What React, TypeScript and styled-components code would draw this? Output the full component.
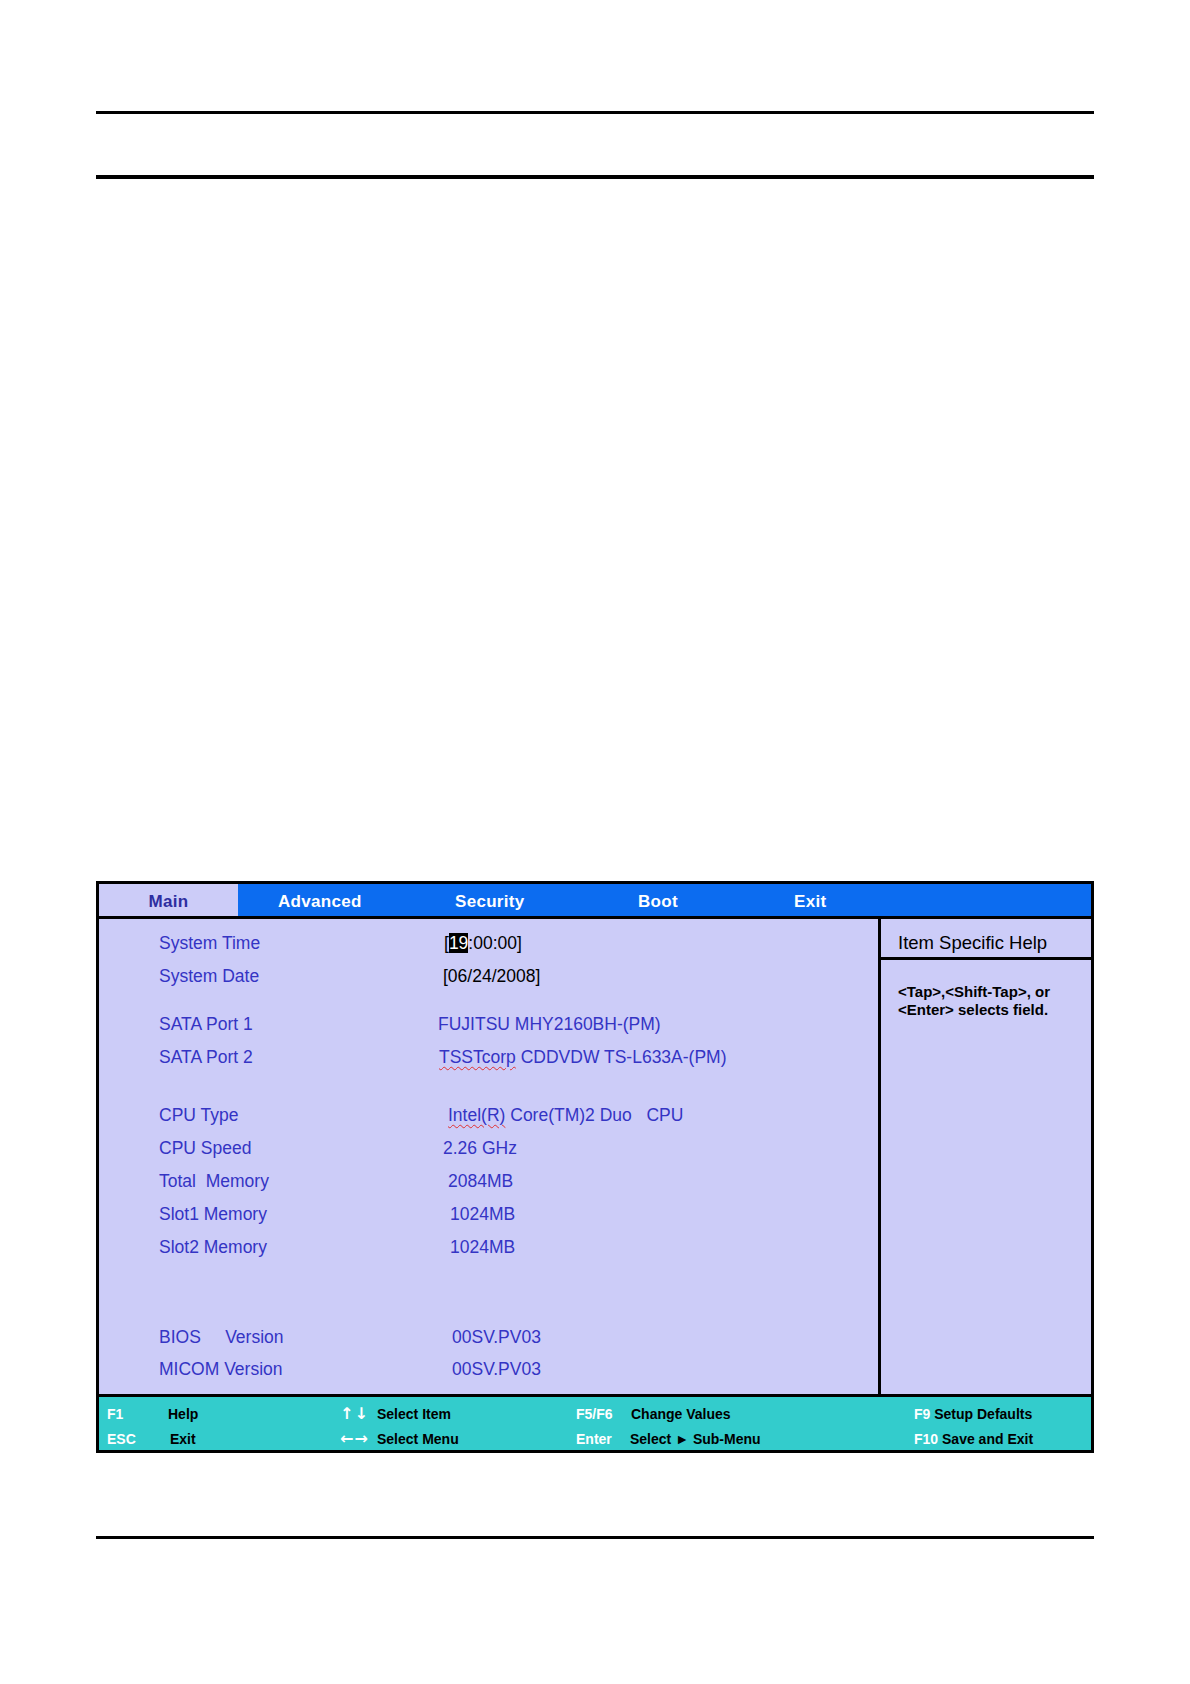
import React from 'react';
import styled, { createGlobalStyle } from 'styled-components';

const GlobalStyle = createGlobalStyle`
    html, body {
        margin: 0;
        padding: 0;
        background: #ffffff;
        font-family: "Liberation Sans", Arial, sans-serif;
    }
`;

const Page = styled.div`
    width: 998px;
    margin-left: 96px;
    padding: 111px 0 140px;
`;

const Rule = styled.div<{ $thickness: number; $top?: number }>`
    height: ${p => p.$thickness}px;
    margin-top: ${p => p.$top || 0}px;
    background: #000;
`;

const Frame = styled.div`
    margin-top: 702px;
    border: 3px solid #000;
    background: #ccccf8;
`;

const TabBar = styled.div`
    display: flex;
    height: 32px;
    background: #0c6cf0;
    border-bottom: 3px solid #000;
`;

const Tab = styled.div<{ $active: boolean; $width: number }>`
    ${p => (p.$width ? `width: ${p.$width}px;` : 'flex: 1;')}
    box-sizing: border-box;
    display: flex;
    align-items: center;
    justify-content: ${p => (p.$active ? 'center' : 'flex-start')};
    padding-left: ${p => (p.$active ? 0 : 40)}px;
    padding-top: 4px;
    background: ${p => (p.$active ? '#ccccf8' : 'transparent')};
    color: ${p => (p.$active ? '#2e2ea0' : '#ffffff')};
    font-size: 17px;
    font-weight: bold;
    letter-spacing: 0.3px;
`;

const Body = styled.div`
    display: flex;
    height: 475px;
`;

const Settings = styled.div`
    width: 779px;
    padding: 8px 0 0 60px;
    box-sizing: border-box;
`;

const Row = styled.div<{ $gap: number }>`
    display: grid;
    grid-template-columns: 279px 1fr;
    align-items: center;
    height: 33px;
    margin-top: ${p => p.$gap}px;
    font-size: 17.5px;
    color: #3434c4;
`;

const Label = styled.span`
    white-space: pre;
`;

const Value = styled.span<{ $indent: number; $dark?: boolean }>`
    padding-left: ${p => p.$indent}px;
    color: ${p => (p.$dark ? '#000000' : '#3434c4')};
    white-space: pre;
`;

const Cursor = styled.span`
    background: #000;
    color: #fff;
`;

const Squiggle = styled.span`
    text-decoration: underline wavy #e03030;
    text-decoration-thickness: 1px;
    text-underline-offset: 3px;
`;

const HelpPanel = styled.div`
    flex: 1;
    border-left: 3px solid #000;
    display: flex;
    flex-direction: column;
`;

const HelpTitle = styled.div`
    height: 41px;
    box-sizing: border-box;
    border-bottom: 3px solid #000;
    padding: 12px 0 0 17px;
    line-height: 24px;
    font-size: 18.5px;
    color: #000;
`;

const HelpText = styled.div`
    padding: 23px 0 0 17px;
    font-size: 15px;
    font-weight: bold;
    line-height: 18px;
    color: #000;
`;

const KeyBar = styled.div`
    display: grid;
    grid-template-columns: 61px 172px 37px 199px 55px 283px 1fr;
    grid-auto-rows: 25px;
    align-items: center;
    height: 56px;
    box-sizing: border-box;
    padding: 4px 0 0 8px;
    border-top: 3px solid #000;
    background: #33cccc;
    font-size: 14px;
    font-weight: bold;
`;

const Key = styled.span`
    color: #ffffff;
    white-space: pre;
`;

const Arrows = styled.span`
    color: #ffffff;
    font-family: "DejaVu Sans", sans-serif;
    font-size: 16px;
    font-weight: bold;
    letter-spacing: 1px;
    white-space: pre;
`;

const KeyDesc = styled.span<{ $shift?: number }>`
    color: #000;
    margin-left: ${p => p.$shift || 0}px;
    white-space: pre;
`;

interface InfoRow {
    label: string;
    value: React.ReactNode;
    gap?: number;
    indent?: number;
    dark?: boolean;
}

const rows: Array<InfoRow> = [
    {
        label: 'System Time',
        value: (
            <>
                [<Cursor>19</Cursor>:00:00]
            </>
        ),
        indent: 6,
        dark: true
    },
    { label: 'System Date', value: '[06/24/2008]', indent: 5, dark: true },
    { label: 'SATA Port 1', value: 'FUJITSU MHY2160BH-(PM)', gap: 15 },
    {
        label: 'SATA Port 2',
        value: (
            <>
                <Squiggle>TSSTcorp</Squiggle> CDDVDW TS-L633A-(PM)
            </>
        ),
        indent: 1
    },
    {
        label: 'CPU Type',
        value: (
            <>
                <Squiggle>Intel(R)</Squiggle> Core(TM)2 Duo{'   '}CPU
            </>
        ),
        gap: 25,
        indent: 10
    },
    { label: 'CPU Speed', value: '2.26 GHz', indent: 5 },
    { label: 'Total  Memory', value: '2084MB', indent: 10 },
    { label: 'Slot1 Memory', value: '1024MB', indent: 12 },
    { label: 'Slot2 Memory', value: '1024MB', indent: 12 },
    { label: 'BIOS     Version', value: '00SV.PV03', gap: 57, indent: 14 },
    { label: 'MICOM Version', value: '00SV.PV03', indent: 14, gap: -1 }
];

const tabs = [
    { name: 'Main', width: 139 },
    { name: 'Advanced', width: 177 },
    { name: 'Security', width: 183 },
    { name: 'Boot', width: 156 },
    { name: 'Exit', width: 0 }
];

const App: React.FC = () => (
    <>
        <GlobalStyle />
        <Page>
            <Rule $thickness={3} />
            <Rule $thickness={4} $top={61} />
            <Frame>
                <TabBar>
                    {tabs.map(({ name, width }, i) => (
                        <Tab key={name} $active={i === 0} $width={width}>
                            {name}
                        </Tab>
                    ))}
                </TabBar>
                <Body>
                    <Settings>
                        {rows.map(({ label, value, gap, indent, dark }) => (
                            <Row key={label} $gap={gap || 0}>
                                <Label>{label}</Label>
                                <Value $indent={indent || 0} $dark={dark}>
                                    {value}
                                </Value>
                            </Row>
                        ))}
                    </Settings>
                    <HelpPanel>
                        <HelpTitle>Item Specific Help</HelpTitle>
                        <HelpText>
                            &lt;Tap&gt;,&lt;Shift-Tap&gt;, or
                            <br />
                            &lt;Enter&gt; selects field.
                        </HelpText>
                    </HelpPanel>
                </Body>
                <KeyBar>
                    <Key>F1</Key>
                    <KeyDesc>Help</KeyDesc>
                    <Arrows>↑↓</Arrows>
                    <KeyDesc>Select Item</KeyDesc>
                    <Key>F5/F6</Key>
                    <KeyDesc>Change Values</KeyDesc>
                    <KeyDesc>
                        <Key>F9</Key> Setup Defaults
                    </KeyDesc>

                    <Key>ESC</Key>
                    <KeyDesc $shift={2}>Exit</KeyDesc>
                    <Arrows>←→</Arrows>
                    <KeyDesc>Select Menu</KeyDesc>
                    <Key>Enter</Key>
                    <KeyDesc $shift={-1}>Select ► Sub-Menu</KeyDesc>
                    <KeyDesc>
                        <Key>F10</Key> Save and Exit
                    </KeyDesc>
                </KeyBar>
            </Frame>
            <Rule $thickness={3} $top={83} />
        </Page>
    </>
);

export default App;
